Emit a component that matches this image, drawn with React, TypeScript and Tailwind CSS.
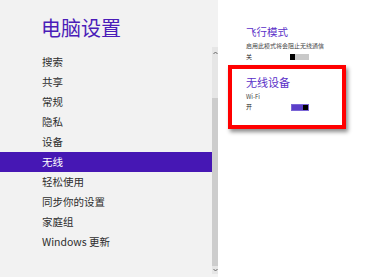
import React from "react";

const F = { fontFamily: '"Noto Sans CJK SC", "Noto Sans", sans-serif' };

const items = ["搜索", "共享", "常规", "隐私", "设备", "无线", "轻松使用", "同步你的设置", "家庭组", "Windows 更新"];

export default function App() {
  return (
    <div className="flex h-[277px] w-[385px] overflow-hidden bg-white" style={F}>
      <div className="w-[212px] shrink-0 bg-[#f2f2f2] flex flex-col">
        <div className="mt-[14px] h-[28px] pl-[41px] text-[20px] leading-[28px] text-[#4a1cb8]">电脑设置</div>
        <div className="mt-[10px] flex flex-col">
          {items.map((t) => (
            <div
              key={t}
              className={
                t === "无线"
                  ? "h-[20px] pl-[42px] text-[10.5px] leading-[20px] bg-[#4617b4] text-white"
                  : "h-[20px] pl-[42px] text-[10.5px] leading-[20px] text-[#2e2e2e]"
              }
            >
              {t}
            </div>
          ))}
        </div>
      </div>
      <div className="w-[6px] shrink-0 bg-[#f2f2f2] pt-[47px] pb-[3px] flex">
        <div className="flex-1 flex flex-col bg-[#e6e6e6]">
          <div className="h-[12px] flex items-center justify-center">
            <svg width="5" height="4" viewBox="0 0 5 4"><path d="M0.5 3 L2.5 1 L4.5 3" stroke="#666" strokeWidth="1" fill="none" /></svg>
          </div>
          <div className="mt-[39px] flex-1 bg-[#cdcdcd]" />
          <div className="h-[8px] flex items-center justify-center">
            <svg width="5" height="4" viewBox="0 0 5 4"><path d="M0.5 1 L2.5 3 L4.5 1" stroke="#666" strokeWidth="1" fill="none" /></svg>
          </div>
        </div>
      </div>
      <div className="flex-1 bg-white pl-[10px] pt-[25px] flex flex-col">
        <div className="pl-[18px] flex flex-col">
          <div className="h-[14px] text-[10.5px] leading-[14px] text-[#5a2fc8]">飞行模式</div>
          <div className="mt-[3px] h-[8px] text-[6px] leading-[8px] text-[#444]">启用此模式将会阻止无线通信</div>
          <div className="mt-[2.5px] h-[8px] flex items-center">
            <div className="w-[44px] text-[6px] leading-[8px] text-[#222]">关</div>
            <div className="w-[19px] h-[6px] bg-[#c9c9c9] flex">
              <div className="w-[5px] h-full bg-black" />
            </div>
          </div>
        </div>
        <div className="mt-[4.5px] w-[118px] h-[64px] border-4 border-[#ff0000] shadow-[2px_3px_4px_rgba(0,0,0,0.45)] pl-[14px] pt-[6px] flex flex-col">
          <div className="h-[14px] text-[11px] leading-[14px] text-[#5a2fc8]">无线设备</div>
          <div className="mt-[4px] h-[8px] text-[6px] leading-[8px] text-[#444]">Wi-Fi</div>
          <div className="mt-[2px] h-[8px] flex items-center">
            <div className="w-[45px] text-[6px] leading-[8px] text-[#222]">开</div>
            <div className="w-[18px] h-[7px] bg-[#5b3ec9] border border-[#7b66d6] flex justify-end">
              <div className="w-[5px] h-full bg-black" />
            </div>
          </div>
        </div>
      </div>
    </div>
  );
}
